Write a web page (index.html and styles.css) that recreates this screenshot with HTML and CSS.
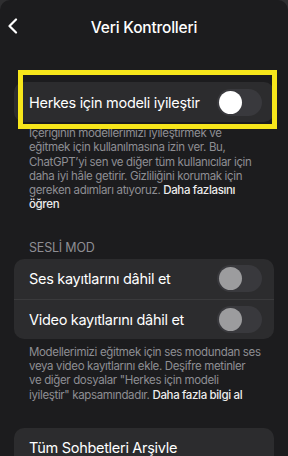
FILE: index.html
```html
<!DOCTYPE html>
<html lang="tr">
<head>
    <meta charset="UTF-8">
    <meta name="viewport" content="width=device-width, initial-scale=1.0">
    <title>Veri Kontrolleri</title>
    <link rel="stylesheet" href="styles.css">
</head>
<body>
    <div class="screen">
        <div class="topbar">
            <svg class="back" width="12" height="16" viewBox="0 0 12 16">
                <path d="M9 1.5 L2.5 8 L9 14.5" fill="none" stroke="#fff" stroke-width="2.2" stroke-linecap="round" stroke-linejoin="round"/>
            </svg>
            <div class="title">Veri Kontrolleri</div>
        </div>

        <div class="group first">
            <div class="card">
                <div class="row">
                    <span>Herkes için modeli iyileştir</span>
                    <div class="toggle on"><div class="knob"></div></div>
                </div>
            </div>
            <div class="highlight"></div>
            <p class="note">İçeriğinin modellerimizi iyileştirmek ve<br>eğitmek için kullanılmasına izin ver. Bu,<br>ChatGPT’yi sen ve diğer tüm kullanıcılar için<br>daha iyi hâle getirir. Gizliliğini korumak için<br>gereken adımları atıyoruz. <a href="#">Daha fazlasını<br>öğren</a></p>
        </div>

        <div class="group">
            <div class="label">SESLİ MOD</div>
            <div class="card">
                <div class="row">
                    <span>Ses kayıtlarını dâhil et</span>
                    <div class="toggle"><div class="knob"></div></div>
                </div>
                <div class="row">
                    <span>Video kayıtlarını dâhil et</span>
                    <div class="toggle"><div class="knob"></div></div>
                </div>
            </div>
            <p class="note">Modellerimizi eğitmek için ses modundan ses<br>veya video kayıtlarını ekle. Deşifre metinler<br>ve diğer dosyalar "Herkes için modeli<br>iyileştir" kapsamındadır. <a href="#">Daha fazla bilgi al</a></p>
        </div>

        <div class="group last">
            <div class="card">
                <div class="row">
                    <span>Tüm Sohbetleri Arşivle</span>
                </div>
            </div>
        </div>
    </div>
</body>
</html>
```

FILE: styles.css
```css
body {
    margin: 0;
    background: #2e2e30; /* shows behind the rounded sheet corners */
    font-family: Inter, "Noto Sans", sans-serif;
    color: #fff;
    overflow: hidden;
}

.screen {
    background: #1c1c1e;
    border-radius: 10px 10px 0 0;
    height: 456px;
    overflow: hidden;
}

.topbar {
    position: relative;
    height: 52px;
    padding-top: 2px;
    box-sizing: border-box;
    display: flex;
    align-items: center;
    justify-content: center;
}

.back {
    position: absolute;
    left: 7px;
    top: 18px;
}

.title {
    font-size: 15.5px;
    font-weight: 500;
    letter-spacing: -0.2px;
}

.group {
    position: relative;
    margin: 0 14px;
}

.group.first {
    margin-top: 30px;
}

.card {
    background: #2c2c2e;
    border-radius: 10px;
}

.row {
    height: 40px;
    display: flex;
    align-items: center;
    justify-content: space-between;
    padding: 0 12px 0 15px;
    font-size: 14.5px;
    letter-spacing: -0.3px;
}

.row + .row {
    border-top: 1px solid #3a3a3c;
    height: 39px;
}

.toggle {
    width: 45px;
    height: 27px;
    border-radius: 14px;
    background: #39393d;
    padding: 2px;
    box-sizing: border-box;
}

.knob {
    width: 23px;
    height: 23px;
    border-radius: 50%;
    background: #9c9c9e;
}

.toggle.on .knob {
    background: #fff;
}

.highlight {
    position: absolute;
    left: 4px;
    top: -12px;
    width: 249px;
    height: 49px;
    border: 5px solid #f7e61b;
}

.note {
    margin: 6px 0 0;
    padding: 0 4px 0 15px;
    font-size: 11.5px;
    line-height: 14.3px;
    color: #8e8e93;
    letter-spacing: -0.35px;
    white-space: nowrap;
}

.first .note {
    margin-top: 4px;
}

.note a {
    color: #ececec;
    font-weight: 500;
    text-decoration: none;
}

.label {
    margin: 28px 0 4px;
    padding-left: 15px;
    font-size: 12.5px;
    line-height: 15px;
    color: #8e8e93;
    letter-spacing: -0.2px;
}

.group.last {
    margin-top: 26px;
}
```
